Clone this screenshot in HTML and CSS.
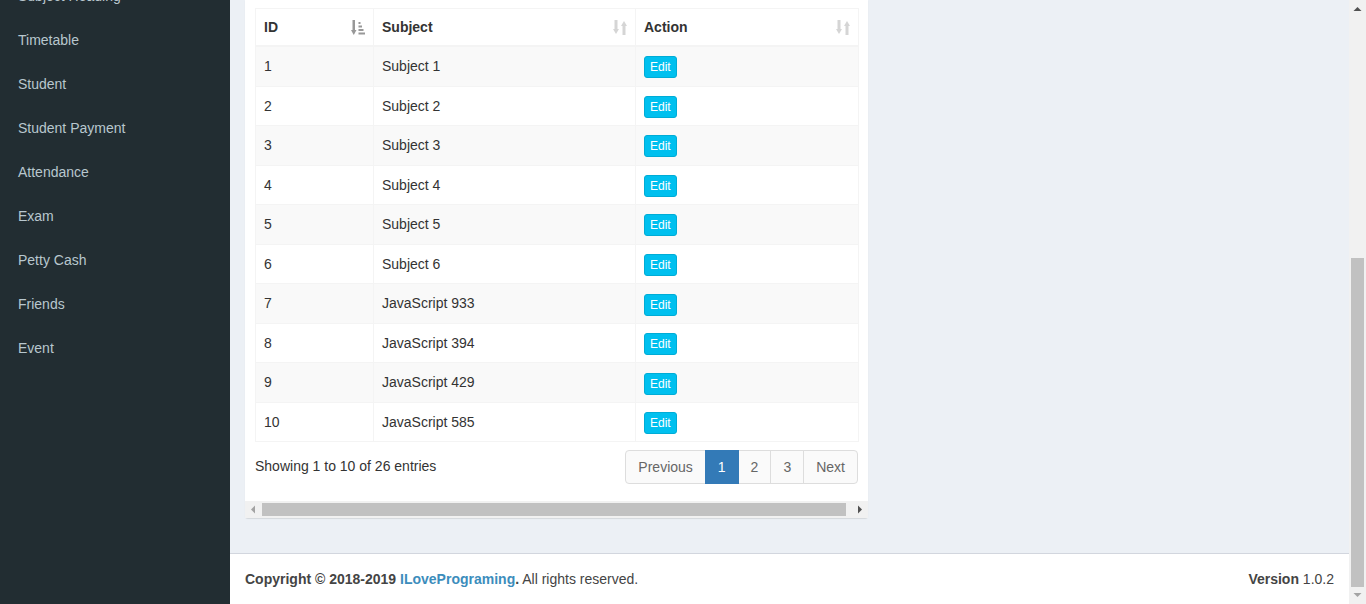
FILE: index.html
```html
<!DOCTYPE html>
<html lang="en">
<head>
<meta charset="utf-8">
<title>Subject List</title>
<link rel="stylesheet" href="styles.css">
</head>
<body>
<div class="app">
  <aside class="sidebar">
    <ul class="menu">
      <li><a href="#">Subject Heading</a></li>
      <li><a href="#">Timetable</a></li>
      <li><a href="#">Student</a></li>
      <li><a href="#">Student Payment</a></li>
      <li><a href="#">Attendance</a></li>
      <li><a href="#">Exam</a></li>
      <li><a href="#">Petty Cash</a></li>
      <li><a href="#">Friends</a></li>
      <li><a href="#">Event</a></li>
    </ul>
  </aside>
  <div class="main">
    <div class="content-wrapper">
      <section class="content">
        <div class="box">
          <div class="box-body">
            <table class="table">
              <colgroup>
                <col class="col-id">
                <col class="col-subject">
                <col class="col-action">
              </colgroup>
              <thead>
                <tr>
                  <th><div class="th-in"><span>ID</span>
                    <svg class="sort-icon sort-active" viewBox="0 0 14 15" width="14" height="15"><rect x="1.5" y="0" width="2.5" height="11"/><polygon points="0,10 5.5,10 2.75,15"/><rect x="7.5" y="2" width="2" height="2"/><rect x="7.5" y="5.5" width="3.5" height="2"/><rect x="7.5" y="9" width="5" height="2"/><rect x="7.5" y="12.5" width="6.5" height="2"/></svg></div></th>
                  <th><div class="th-in"><span>Subject</span>
                    <svg class="sort-icon" viewBox="0 0 14 15" width="14" height="15"><rect x="1.5" y="0" width="3" height="10"/><polygon points="0,9 6,9 3,14"/><rect x="9.5" y="5" width="3" height="10"/><polygon points="8,6 14,6 11,1"/></svg></div></th>
                  <th><div class="th-in"><span>Action</span>
                    <svg class="sort-icon" viewBox="0 0 14 15" width="14" height="15"><rect x="1.5" y="0" width="3" height="10"/><polygon points="0,9 6,9 3,14"/><rect x="9.5" y="5" width="3" height="10"/><polygon points="8,6 14,6 11,1"/></svg></div></th>
                </tr>
              </thead>
              <tbody>
                <tr><td>1</td><td>Subject 1</td><td><a class="btn-edit" href="#">Edit</a></td></tr>
                <tr><td>2</td><td>Subject 2</td><td><a class="btn-edit" href="#">Edit</a></td></tr>
                <tr><td>3</td><td>Subject 3</td><td><a class="btn-edit" href="#">Edit</a></td></tr>
                <tr><td>4</td><td>Subject 4</td><td><a class="btn-edit" href="#">Edit</a></td></tr>
                <tr><td>5</td><td>Subject 5</td><td><a class="btn-edit" href="#">Edit</a></td></tr>
                <tr><td>6</td><td>Subject 6</td><td><a class="btn-edit" href="#">Edit</a></td></tr>
                <tr><td>7</td><td>JavaScript 933</td><td><a class="btn-edit" href="#">Edit</a></td></tr>
                <tr><td>8</td><td>JavaScript 394</td><td><a class="btn-edit" href="#">Edit</a></td></tr>
                <tr><td>9</td><td>JavaScript 429</td><td><a class="btn-edit" href="#">Edit</a></td></tr>
                <tr><td>10</td><td>JavaScript 585</td><td><a class="btn-edit" href="#">Edit</a></td></tr>
              </tbody>
            </table>
            <div class="dt-bottom">
              <div class="dt-info">Showing 1 to 10 of 26 entries</div>
              <ul class="pagination">
                <li><a href="#">Previous</a></li>
                <li class="active"><a href="#">1</a></li>
                <li><a href="#">2</a></li>
                <li><a href="#">3</a></li>
                <li><a href="#">Next</a></li>
              </ul>
            </div>
          </div>
          <div class="hscroll">
            <div class="sb-btn"><svg viewBox="0 0 17 17" width="17" height="17"><polygon class="arrow-off" points="10,4.5 10,12.5 6,8.5"/></svg></div>
            <div class="hscroll-track"><div class="hscroll-thumb"></div></div>
            <div class="sb-btn"><svg viewBox="0 0 17 17" width="17" height="17"><polygon class="arrow-on" points="7,4.5 7,12.5 11,8.5"/></svg></div>
          </div>
        </div>
      </section>
    </div>
    <footer class="main-footer">
      <div><strong>Copyright &copy; 2018-2019 <a href="#">ILovePrograming</a>.</strong> All rights reserved.</div>
      <div><b>Version</b> 1.0.2</div>
    </footer>
  </div>
</div>
<div class="vscroll">
  <div class="sb-btn"><svg viewBox="0 0 17 17" width="17" height="17"><polygon class="arrow-on" points="4.5,11 12.5,11 8.5,7"/></svg></div>
  <div class="vscroll-track"><div class="vscroll-thumb"></div></div>
  <div class="sb-btn"><svg viewBox="0 0 17 17" width="17" height="17"><polygon class="arrow-off" points="4.5,6 12.5,6 8.5,10"/></svg></div>
</div>
</body>
</html>
```
FILE: styles.css
```css
* { box-sizing: border-box; }
html, body { margin: 0; padding: 0; }
body {
  display: flex;
  height: 604px;
  overflow: hidden;
  font-family: "Liberation Sans", Arial, sans-serif;
  font-size: 14px;
  line-height: 20px;
  color: #333;
  background: #ecf0f5;
}
a { text-decoration: none; }

.app { flex: 1; min-width: 0; display: flex; height: 604px; overflow: hidden; }

/* sidebar */
.sidebar { width: 230px; flex: none; background: #222d32; overflow: hidden; }
.menu { list-style: none; margin: -26px 0 0; padding: 0; }
.menu a {
  display: block; padding: 12px 5px 12px 15px; border-left: 3px solid transparent;
  color: #b8c7ce; line-height: 20px;
}

/* main column */
.main { flex: 1; min-width: 0; display: flex; flex-direction: column; background: #ecf0f5; }
.content-wrapper { flex: 1; min-height: 0; }
.content { padding: 0 15px; }

.box {
  width: 623px; background: #fff;
  border-radius: 0 0 3px 3px; box-shadow: 0 1px 1px rgba(0, 0, 0, 0.1);
}
.box-body { padding: 8px 10px 15px; }

.table {
  width: 603px; border-collapse: separate; border-spacing: 0;
  border-top: 1px solid #f4f4f4; border-left: 1px solid #f4f4f4;
  table-layout: fixed; margin-bottom: 6px;
}
.col-id { width: 118px; }
.col-subject { width: 262px; }
.col-action { width: 223px; }
.table th, .table td {
  border-right: 1px solid #f4f4f4; border-bottom: 1px solid #f4f4f4;
  padding: 8px; line-height: 20px; text-align: left; vertical-align: top;
}
.table td { padding-top: 9px; padding-bottom: 7.25px; }
.table th { font-weight: bold; border-bottom-width: 2px; }
.th-in { display: flex; justify-content: space-between; align-items: center; }
.sort-icon { fill: #333; opacity: 0.2; flex: none; }
.sort-icon.sort-active { opacity: 0.5; }
.table tbody tr:nth-child(odd) td { background: #f9f9f9; }
.btn-edit {
  display: inline-block; vertical-align: middle; font-size: 12px; line-height: 18px;
  padding: 1px 5px; border: 1px solid #00acd6; background: #00c0ef;
  color: #fff; border-radius: 3px;
}

.dt-bottom { width: 603px; display: flex; justify-content: space-between; align-items: flex-start; }
.dt-info { padding-top: 8px; }
.pagination { display: flex; list-style: none; margin: 2px 0; padding: 0; }
.pagination li a {
  display: block; padding: 6px 12px; line-height: 20px; margin-left: -1px;
  border: 1px solid #ddd; background: #fafafa; color: #666;
  position: relative;
}
.pagination li:first-child a { margin-left: 0; border-radius: 4px 0 0 4px; }
.pagination li:last-child a { border-radius: 0 4px 4px 0; }
.pagination li.active a { background: #337ab7; border-color: #337ab7; color: #fff; z-index: 2; }

/* scrollbars */
.sb-btn { width: 17px; height: 17px; flex: none; display: block; }
.sb-btn svg { display: block; }
.arrow-on { fill: #505050; }
.arrow-off { fill: #a3a3a3; }

.hscroll { display: flex; height: 17px; background: #f1f1f1; }
.hscroll-track { flex: 1; padding: 2px 0; }
.hscroll-thumb { width: 584px; height: 13px; background: #c1c1c1; }

.vscroll { width: 17px; flex: none; height: 604px; display: flex; flex-direction: column; background: #f1f1f1; }
.vscroll-track { flex: 1; display: flex; flex-direction: column; justify-content: flex-end; padding: 0 2px; }
.vscroll-thumb { height: 329px; background: #c1c1c1; }

/* footer */
.main-footer {
  flex: none;
  display: flex; justify-content: space-between;
  background: #fff; padding: 15px; border-top: 1px solid #d2d6de;
  color: #444; line-height: 20px;
}
.main-footer a { color: #3c8dbc; }
```
